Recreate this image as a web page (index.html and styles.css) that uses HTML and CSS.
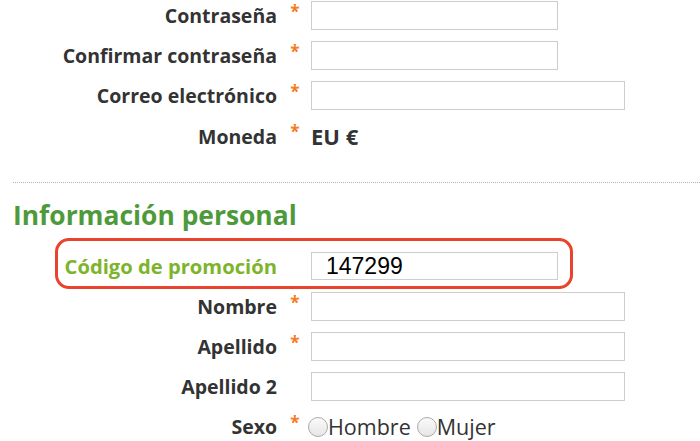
FILE: index.html
```html
<!DOCTYPE html>
<html lang="es">
<head>
  <meta charset="UTF-8" />
  <meta name="viewport" content="width=device-width, initial-scale=1.0"/>
  <title>Registro</title>
  <link rel="stylesheet" href="styles.css">
</head>
<body>

  <form class="signup">
    <div class="row">
      <label class="lbl">Contraseña</label>
      <span class="req">*</span>
      <input class="field short" type="text">
    </div>
    <div class="row">
      <label class="lbl">Confirmar contraseña</label>
      <span class="req">*</span>
      <input class="field short" type="text">
    </div>
    <div class="row">
      <label class="lbl">Correo electrónico</label>
      <span class="req">*</span>
      <input class="field" type="text">
    </div>
    <div class="row">
      <label class="lbl">Moneda</label>
      <span class="req">*</span>
      <span class="value">EU €</span>
    </div>

    <hr class="sep">

    <h2 class="section-title">Información personal</h2>

    <div class="promo-box">
      <div class="row promo">
        <label class="lbl">Código de promoción</label>
        <span class="req"></span>
        <input class="field short code" type="text" value="147299">
      </div>
    </div>

    <div class="row">
      <label class="lbl">Nombre</label>
      <span class="req">*</span>
      <input class="field" type="text">
    </div>
    <div class="row">
      <label class="lbl">Apellido</label>
      <span class="req">*</span>
      <input class="field" type="text">
    </div>
    <div class="row">
      <label class="lbl">Apellido 2</label>
      <span class="req"></span>
      <input class="field" type="text">
    </div>
    <div class="row">
      <label class="lbl">Sexo</label>
      <span class="req">*</span>
      <div class="radios">
        <label class="radio"><input type="radio" name="sexo">Hombre</label>
        <label class="radio"><input type="radio" name="sexo">Mujer</label>
      </div>
    </div>
  </form>

</body>
</html>
```

FILE: styles.css
```css
body {
  margin: 0;
  background: #fff;
  font-family: "Open Sans", "DejaVu Sans", sans-serif;
  color: #333;
  overflow: hidden;
}
.signup {
  display: flex;
  flex-direction: column;
  padding-top: 1px;
}
.row {
  display: grid;
  grid-template-columns: 277px 34px 1fr;
  align-items: center;
  height: 29px;
  margin-bottom: 11px;
  flex-shrink: 0;
}
.lbl {
  text-align: right;
  font-weight: bold;
  font-size: 19.5px;
  line-height: 29px;
}
.req {
  align-self: start;
  text-align: center;
  color: #f47b20;
  font-weight: bold;
  font-size: 17px;
  line-height: 22px;
  padding-left: 2px;
}
.field {
  box-sizing: border-box;
  width: 314px;
  height: 29px;
  margin: 0;
  border: 1px solid #cdcdcd;
  background: #fff;
  padding: 0 14px;
}
.field.short {
  width: 247px;
}
.value {
  font-weight: bold;
  font-size: 22px;
}
.sep {
  width: calc(100% - 13px);
  margin: 21px 0 0 13px;
  border: 0;
  border-top: 1px dotted #b5b5b5;
  height: 0;
  flex-shrink: 0;
}
.section-title {
  margin: 15px 0 0 13px;
  font-size: 26.4px;
  line-height: 34px;
  color: #4e9a3b;
}
.promo-box {
  margin: 6px 0 3px 55px;
  width: 518px;
  box-sizing: border-box;
  border: 3px solid #e8432d;
  border-radius: 14px;
  padding: 11px 0 6px;
  flex-shrink: 0;
}
.promo {
  grid-template-columns: 219px 34px 1fr;
  height: 28px;
  margin-bottom: 0;
}
.promo .lbl {
  color: #7db42b;
  font-size: 20.2px;
  line-height: 28px;
}
.code {
  height: 28px;
  font-family: "Liberation Sans", Arial, sans-serif;
  font-size: 23px;
  color: #000;
}
.radios {
  display: flex;
  align-items: center;
  margin-left: -3px;
}
.radio {
  display: flex;
  align-items: center;
  font-size: 21.5px;
  margin-right: 6px;
}
.radio input {
  appearance: none;
  width: 20px;
  height: 20px;
  margin: 0;
  border: 1px solid #aaa;
  border-radius: 50%;
  background: linear-gradient(#fafafa, #e6e6e6);
}
```
